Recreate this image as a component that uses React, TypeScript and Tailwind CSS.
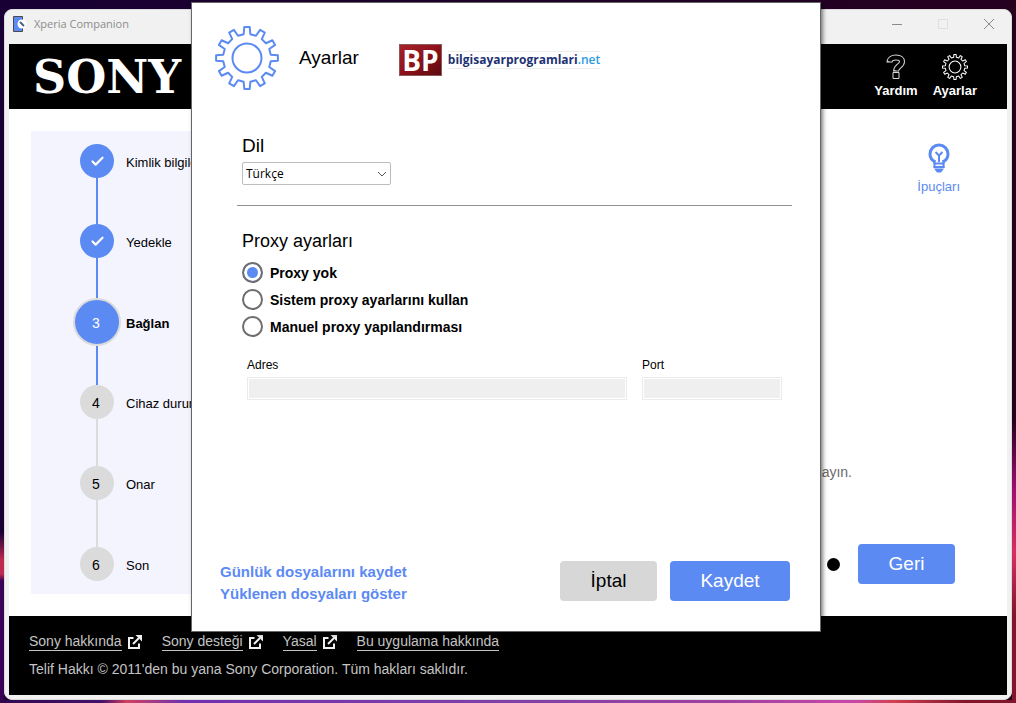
import { useState } from "react";
import { Check } from "lucide-react";

const steps = [
  { label: "Kimlik bilgileri", state: "done", line: "h-[46px] bg-[#5c8af3]" },
  { label: "Yedekle", state: "done", line: "h-10 bg-[#5c8af3]" },
  { label: "Bağlan", state: "active", line: "h-[39px] bg-[#5c8af3]" },
  { label: "Cihaz durumu", state: "todo", line: "h-[47px] bg-[#dbdbdb]" },
  { label: "Onar", state: "todo", line: "h-[47px] bg-[#dbdbdb]" },
  { label: "Son", state: "todo", line: "" },
];

const footerLinks = [
  { label: "Sony hakkında", external: true },
  { label: "Sony desteği", external: true },
  { label: "Yasal", external: true },
  { label: "Bu uygulama hakkında", external: false },
];

const proxyOptions = [
  { value: "none", label: "Proxy yok" },
  { value: "system", label: "Sistem proxy ayarlarını kullan" },
  { value: "manual", label: "Manuel proxy yapılandırması" },
];

function gearPoints() {
  const corners = [
    [-8, 24],
    [-5, 31],
    [5, 31],
    [8, 24],
  ];
  const points: string[] = [];
  for (let i = 0; i < 12; i++) {
    for (const [offset, r] of corners) {
      const a = ((i * 30 + offset - 90) * Math.PI) / 180;
      points.push(`${(32 + r * Math.cos(a)).toFixed(2)},${(32 + r * Math.sin(a)).toFixed(2)}`);
    }
  }
  return points.join(" ");
}

function GearIcon({ className, stroke }: { className: string; stroke: number }) {
  return (
    <svg viewBox="0 0 64 64" className={className} fill="none" stroke="currentColor" strokeWidth={stroke} strokeLinejoin="round">
      <polygon points={gearPoints()} />
      <circle cx="32" cy="32" r="14.5" />
    </svg>
  );
}

function HelpIcon() {
  const hook = "M3.5 8.5C3.5 5.3 6 3.5 10 3.5c4 0 6 1.8 6 4.3 0 4.2-6 4.200-6 9.700";
  return (
    <svg viewBox="0 0 20 26" className="h-[26px] w-5" fill="none">
      <path d={hook} stroke="#d8d8d8" strokeWidth="6" />
      <path d={hook} stroke="#000" strokeWidth="4" pathLength="100" strokeDasharray="93 100" strokeDashoffset="-3.5" />
      <path d="M7 18.500h6v6H7z" stroke="#d8d8d8" />
    </svg>
  );
}

function BulbIcon() {
  return (
    <svg viewBox="0 0 22 30" className="h-[30px] w-[22px]" fill="none" stroke="currentColor">
      <path d="M7.500 19C4 17.500 2 14.800 2 11a9 9 0 0 1 18 0c0 3.800-2 6.500-5.500 8" strokeWidth="3" />
      <path d="M7.500 9l3.500 3.500L14.500 9M11 12.500V19" strokeWidth="2" />
      <path d="M5.500 20.500h11M5.500 24h11" strokeWidth="2" />
      <path d="M6.500 19v6M15.500 19v6" strokeWidth="2" />
      <path d="M6 25.500h10l-3 4H9z" fill="currentColor" stroke="none" />
    </svg>
  );
}

function ExternalIcon() {
  return (
    <svg viewBox="0 0 14 14" className="h-3.5 w-3.5" fill="none" stroke="#f0f0f0" strokeWidth="2">
      <path d="M5.500 3H1v10h10V8.500" />
      <path d="M5 9l6-6" />
      <path d="M7.500 0H14v6.500z" fill="#f0f0f0" stroke="none" />
    </svg>
  );
}

function AppIcon() {
  return (
    <svg viewBox="0 0 14 16" className="h-4 w-3.5">
      <path d="M.5.5h9v15h-9z" fill="#5c8af3" stroke="#4a4a4a" />
      <circle cx="9" cy="8" r="4.500" fill="#fff" />
      <path d="M7 6l4 4" stroke="#4a5f8c" strokeWidth="2" />
    </svg>
  );
}

function TitleBar() {
  return (
    <div className="flex h-[34px] items-center justify-between pr-1.5 pb-1.5 pl-1">
      <div className="flex items-center gap-[7px] font-['Open_Sans',sans-serif] text-[11px] text-[#8c8c8c]">
        <AppIcon />
        <span>Xperia Companion</span>
      </div>
      <div className="flex items-center gap-[22px] text-[#8a8a8a]">
        <button aria-label="Simge durumuna küçült" className="flex h-6 w-6 items-center justify-center">
          <span className="h-px w-2.5 bg-[#8a8a8a]" />
        </button>
        <button aria-label="Ekranı kapla" className="flex h-6 w-6 items-center justify-center">
          <span className="h-2.5 w-2.5 border border-[#e0e0e0]" />
        </button>
        <button aria-label="Kapat" className="flex h-6 w-6 items-center justify-center">
          <svg viewBox="0 0 10 10" className="h-2.5 w-2.5" stroke="currentColor">
            <path d="M0 0l10 10M10 0L0 10" />
          </svg>
        </button>
      </div>
    </div>
  );
}

function Sidebar() {
  return (
    <ol className="w-[280px] bg-[#f4f4ff] py-[13px] pl-[42px] text-[13px]">
      {steps.map((step, i) => (
        <li key={step.label}>
          <div className="flex items-center gap-[5px]">
            <div className="flex w-12 justify-center">
              {step.state === "active" ? (
                <span className="flex h-12 w-12 items-center justify-center rounded-full border-2 border-[#dbdbdb] bg-[#5c8af3] pt-0.5 pr-0.5 text-sm text-white">
                  {i + 1}
                </span>
              ) : step.state === "done" ? (
                <span className="flex h-[34px] w-[34px] items-center justify-center rounded-full bg-[#5c8af3] text-white">
                  <Check size={15} strokeWidth={3.5} />
                </span>
              ) : (
                <span className="flex h-[34px] w-[34px] items-center justify-center rounded-full bg-[#dbdbdb] pt-0.5 pr-0.5 text-sm">
                  {i + 1}
                </span>
              )}
            </div>
            <span className={step.state === "active" ? "pt-[3px] font-bold" : "pt-[3px]"}>{step.label}</span>
          </div>
          {step.line && (
            <div className="flex w-12 justify-center">
              <span className={`w-0.5 ${step.line}`} />
            </div>
          )}
        </li>
      ))}
    </ol>
  );
}

function SettingsDialog() {
  const [proxy, setProxy] = useState("none");
  const manual = proxy === "manual";

  return (
    <div
      role="dialog"
      aria-labelledby="settings-title"
      className="flex min-h-[630px] w-full max-w-[630px] flex-col border border-[#666] bg-white shadow-[2px_2px_4px_rgba(0,0,0,0.5)]"
    >
      <div className="flex items-center gap-5 pt-[23px] pl-[23px]">
        <GearIcon className="h-16 w-16 text-[#5c8af3]" stroke={2} />
        <h1 id="settings-title" className="text-[19px]">
          Ayarlar
        </h1>
        <div className="flex items-center gap-1.5 pt-1 pl-5 font-['Open_Sans',sans-serif] font-bold">
          <span className="flex h-8 w-[43px] items-center justify-center border border-[#8c5a5a] bg-gradient-to-br from-[#a5222b] via-[#8e1119] to-[#5c0a10] text-[28px] leading-8 text-white">
            BP
          </span>
          <span className="border-y border-[#ececec] text-xs leading-4 text-[#1d3273]">
            bilgisayarprogramlari<span className="font-semibold text-[#2b9be0]">.net</span>
          </span>
        </div>
      </div>

      <div className="mx-[45px] mt-11 mr-7 border-b border-[#919191] pb-5 pl-[5px]">
        <label htmlFor="language" className="block text-[19px] leading-6">
          Dil
        </label>
        <div className="mt-1 grid w-[149px]">
          <select
            id="language"
            className="col-start-1 row-start-1 h-[23px] appearance-none rounded-xs border border-[#bdbdbd] bg-white pl-[3px] font-['Open_Sans',sans-serif] text-xs"
          >
            <option>Türkçe</option>
            <option>English</option>
          </select>
          <svg viewBox="0 0 10 6" className="pointer-events-none col-start-1 row-start-1 mr-1 h-1.5 w-2.5 self-center justify-self-end" fill="none" stroke="#555">
            <path d="M1 1l4 4 4-4" />
          </svg>
        </div>
      </div>

      <fieldset className="mt-[23px] px-[50px]">
        <legend className="text-lg leading-6">Proxy ayarları</legend>
        <div className="mt-[9px] flex flex-col gap-1.5 text-sm font-bold">
          {proxyOptions.map((option) => (
            <label key={option.value} className="flex h-[21px] items-center gap-[7px]">
              <input
                type="radio"
                name="proxy"
                value={option.value}
                checked={proxy === option.value}
                onChange={() => setProxy(option.value)}
                className="h-[21px] w-[21px] appearance-none rounded-full border-2 border-[#6e6e6e] bg-white checked:bg-[#5c8af3] checked:shadow-[inset_0_0_0_3px_#fff]"
              />
              {option.label}
            </label>
          ))}
        </div>
      </fieldset>

      <div className="mt-5 flex gap-[15px] pr-[38px] pl-[55px] text-xs">
        <label className="flex-1">
          Adres
          <input
            type="text"
            disabled={!manual}
            className="mt-1 block h-[23px] w-full border border-[#ebebeb] bg-[#efefef] px-1 shadow-[inset_0_0_0_1px_#fff]"
          />
        </label>
        <label className="w-[140px]">
          Port
          <input
            type="text"
            disabled={!manual}
            className="mt-1 block h-[23px] w-full border border-[#ebebeb] bg-[#efefef] px-1 shadow-[inset_0_0_0_1px_#fff]"
          />
        </label>
      </div>

      <div className="mt-auto flex items-end justify-between pr-[30px] pb-[26px] pl-7">
        <div className="flex flex-col text-[15px] leading-[22px] font-bold text-[#5c8af3]">
          <a href="#kaydet">Günlük dosyalarını kaydet</a>
          <a href="#goster">Yüklenen dosyaları göster</a>
        </div>
        <div className="mb-1 flex gap-[13px] text-[19px]">
          <button className="h-10 w-[97px] rounded bg-[#d7d7d7]">İptal</button>
          <button className="h-10 w-[120px] rounded bg-[#5c8af3] text-white">Kaydet</button>
        </div>
      </div>
    </div>
  );
}

export default function App() {
  return (
    <div className="relative flex min-h-screen flex-col bg-[linear-gradient(90deg,#30084e,#45106a_10%,#d04060_12.5%,#7030b0_18%,#8040a8_50%,#a040a0_72%,#c848a8_84%,#d04050_88%,#80152c_95%)] pb-[3px] font-['Liberation_Sans',Arial,sans-serif] text-black">
      <div className="flex flex-1 flex-col bg-[linear-gradient(180deg,#180035_76%,#c02a50_80%,#c02a50_82%,#3a0058_83%),linear-gradient(180deg,#26001f_60%,#a01070_70%,#d83060_79%,#80152c_88%),linear-gradient(90deg,#180035,#26001f)] bg-[length:4px_100%,4px_100%,100%_100%] bg-[position:left,right,center] bg-no-repeat px-1 pt-[9px]">
        <div className="flex flex-1 flex-col rounded-lg border border-[#dcdcdc] bg-[#f1f1f1] px-1 pb-1">
          <TitleBar />
          <header className="flex h-[65px] items-center justify-between bg-black pr-[30px] pl-6 text-white">
            <span className="font-['DejaVu_Serif',serif] text-[46px] leading-none font-bold">SONY</span>
            <nav className="flex gap-[15px] text-[13px] leading-4 font-bold">
              <button className="flex flex-col items-center gap-[3px]">
                <HelpIcon />
                Yardım
              </button>
              <button className="flex flex-col items-center gap-[3px]">
                <GearIcon className="h-[26px] w-[26px]" stroke={2.5} />
                Ayarlar
              </button>
            </nav>
          </header>

          <main className="flex flex-1 justify-between bg-white py-[22px] pl-[22px]">
            <Sidebar />
            <div className="flex flex-1 flex-col pr-[47px]">
              <button className="mt-3 flex flex-col items-center gap-1 self-end text-[13px] text-[#5c8af3]">
                <BulbIcon />
                İpuçları
              </button>
              <p className="mt-auto self-end pr-[108px] text-sm text-[#6b6b6b]">Cihazınızı bağlayın.</p>
              <div className="mt-[62px] mb-[10px] flex items-center justify-end gap-[18px] pr-[5px]">
                <span className="h-[13px] w-[13px] rounded-full bg-black" />
                <button className="h-10 w-[97px] rounded bg-[#5c8af3] text-[19px] text-white">Geri</button>
              </div>
            </div>
          </main>

          <footer className="h-[79px] bg-black px-5 pt-4 text-sm text-[#c4c4c4]">
            <div className="flex gap-5 leading-[18px]">
              {footerLinks.map((link) => (
                <span key={link.label} className="flex items-center gap-1.5">
                  <a href="#" className="border-b border-[#c4c4c4]">
                    {link.label}
                  </a>
                  {link.external && <ExternalIcon />}
                </span>
              ))}
            </div>
            <p className="mt-[9px] leading-[18px]">Telif Hakkı © 2011'den bu yana Sony Corporation. Tüm hakları saklıdır.</p>
          </footer>
        </div>
      </div>

      <div className="absolute inset-0 flex items-start justify-center pt-0.5 pr-1">
        <SettingsDialog />
      </div>
    </div>
  );
}
